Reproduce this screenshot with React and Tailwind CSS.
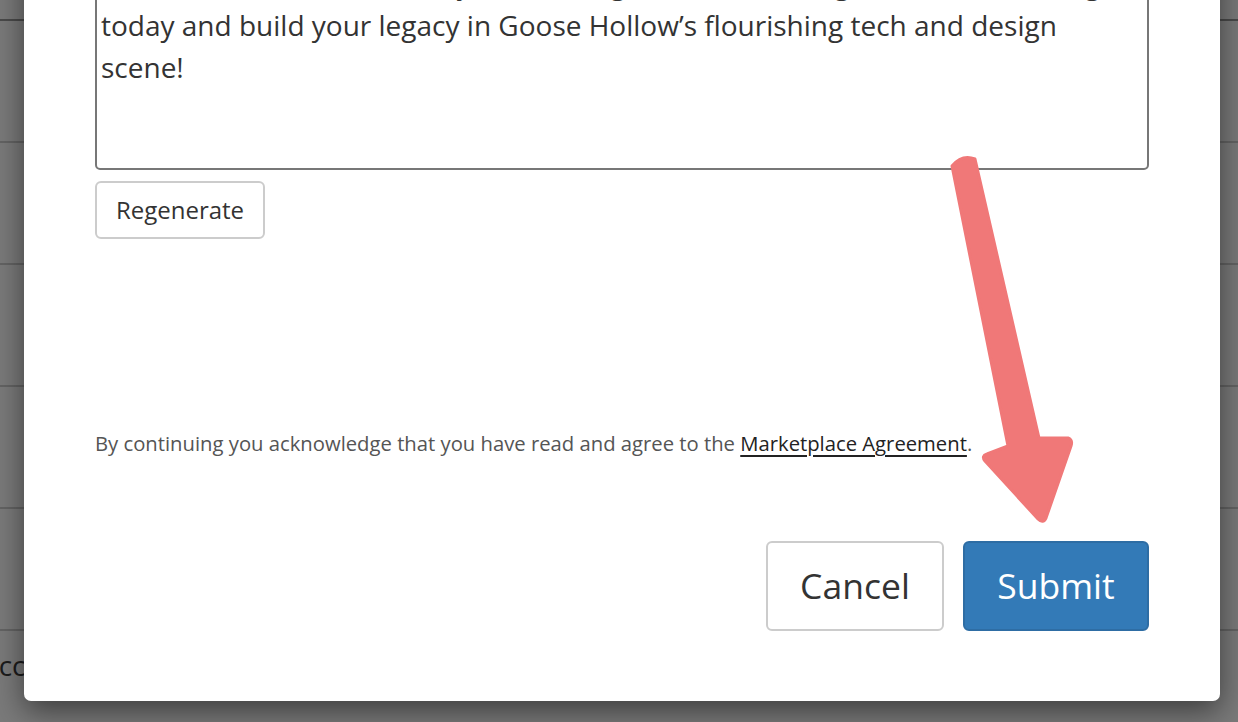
import React from "react";

const descriptionLines = [
  "Become a member of the dynamic design team and bring new art to life. Begin",
  "today and build your legacy in Goose Hollow\u2019s flourishing tech and design",
  "scene!",
];

function BackdropPage() {
  return (
    <div className="absolute inset-0 flex flex-col">
      <div className="h-[21px] shrink-0 border-b-2 border-[#4a4a4a]" />
      {[0, 1, 2, 3, 4].map((row) => (
        <div key={row} className="h-[122px] shrink-0 border-b-2 border-[#636363]" />
      ))}
      <div className="-ml-[19px] pt-[14px] text-[28px] leading-[40px] text-[#1c1c1c]">
        Account settings
      </div>
    </div>
  );
}

function PointerArrow() {
  return (
    <svg
      className="pointer-events-none absolute inset-0"
      width="1238"
      height="722"
      viewBox="0 0 1238 722"
    >
      <path
        d="M952 166 Q962 154 975 159 L1039 438 L1068 438 Q1073 440 1071 446 L1046 518 Q1043 524 1038 519 L985 461 Q981 456 987 454 L1008 446 Z"
        fill="#f07878"
        stroke="#f07878"
        strokeWidth="3"
        strokeLinejoin="round"
      />
    </svg>
  );
}

export default function App() {
  return (
    <div className="relative h-[722px] w-full overflow-hidden bg-[#7a7a7a] font-['Open_Sans',sans-serif]">
      <BackdropPage />

      <div className="relative -mt-[82px] ml-[24px] w-[1196px] rounded-[7px] bg-white px-[71px] pt-[30px] pb-[70px] shadow-[0_10px_30px_rgba(0,0,0,0.5)]">
        <div className="h-[222px] overflow-hidden rounded-[5px] border-2 border-[#777] px-[4px] pt-[12px] text-[28px] leading-[42px] text-[#333]">
          {descriptionLines.map((line, i) => (
            <div key={i} className="whitespace-nowrap">
              {line}
            </div>
          ))}
        </div>

        <button
          type="button"
          className="mt-[11px] h-[58px] w-[170px] rounded-[6px] border-2 border-[#ccc] bg-white text-[24px] text-[#333]"
        >
          Regenerate
        </button>

        <p className="mt-[189px] text-[20.25px] leading-[30px] text-[#555]">
          By continuing you acknowledge that you have read and agree to the{" "}
          <a href="#" className="text-[#222] underline underline-offset-[4px]">
            Marketplace Agreement
          </a>
          .
        </p>

        <div className="mt-[83px] flex justify-end gap-[19px]">
          <button
            type="button"
            className="h-[90px] w-[178px] rounded-[6px] border-2 border-[#ccc] bg-white text-[35.5px] text-[#333]"
          >
            Cancel
          </button>
          <button
            type="button"
            className="h-[90px] w-[186px] rounded-[6px] border-2 border-[#2e6da4] bg-[#337ab7] text-[35.5px] text-white"
          >
            Submit
          </button>
        </div>
      </div>

      <PointerArrow />
    </div>
  );
}
